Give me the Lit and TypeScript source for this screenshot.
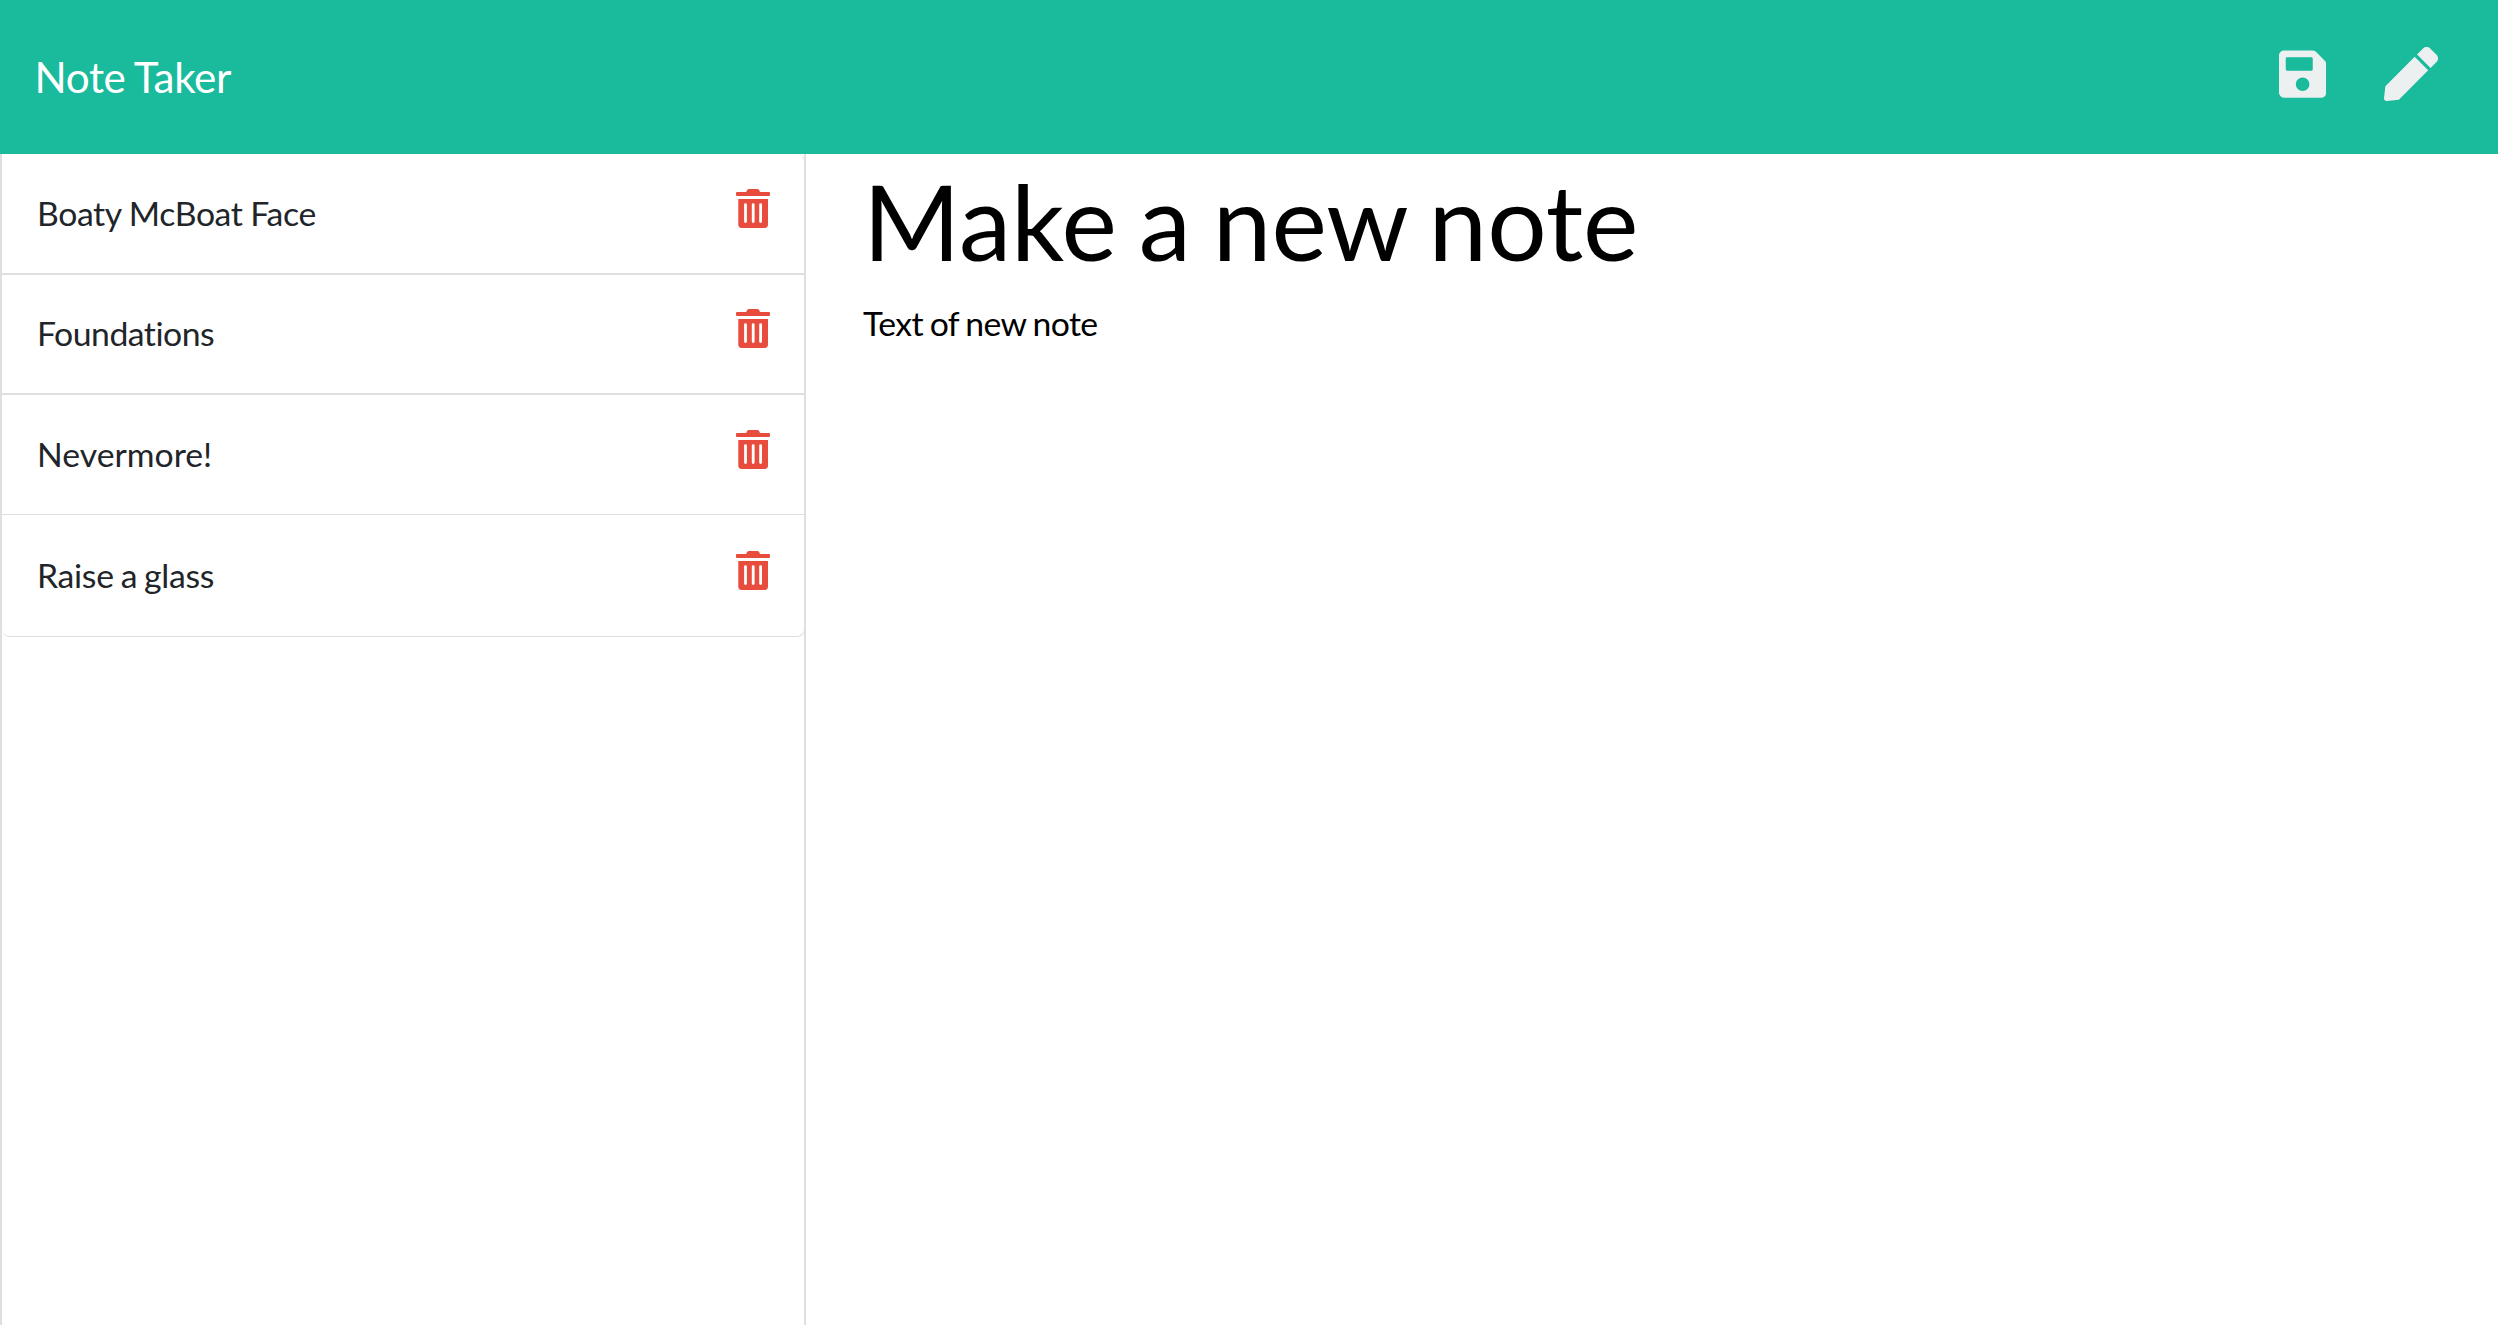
import { LitElement, html, css } from "lit";
import { customElement, state } from "lit/decorators.js";

@customElement("app-root")
export class AppRoot extends LitElement {
  static styles = css`
    :host {
      display: block;
      width: 100%;
      height: 1333px;
      background: #fff;
      font-family: Lato, "Open Sans", sans-serif;
      font-size: 33.75px;
      line-height: 50px;
      color: #212529;
      font-variant-ligatures: none;
    }
    * { box-sizing: border-box; }
    .navbar {
      height: 154px;
      padding: 0 60px 6px 34.5px;
      display: flex;
      align-items: center;
      justify-content: space-between;
      background: #1abb9c;
    }
    .brand {
      color: #fff;
      font-size: 42.19px;
      line-height: 64px;
      padding-top: 5px;
      letter-spacing: -0.35px;
      word-spacing: -0.9px;
    }
    .actions { display: flex; gap: 58px; color: #ecf0f1; }
    .actions svg { height: 54px; fill: currentColor; }
    .main { display: flex; height: 1171px; }
    .card { width: 806px; border: 2px solid #dfdfdf; border-width: 0 2px 0 2px; }
    .list {
      list-style: none;
      margin: 0 -1px 0 0;
      padding: 0;
      border: 1px solid #dfdfdf;
      border-width: 0 1px 1px 0;
      border-radius: 0 8px 8px 8px;
      background: #fff;
    }
    .item {
      display: flex;
      justify-content: space-between;
      align-items: flex-start;
      height: 121px;
      padding: 35px 34px 0 35px;
      border-bottom: 2px solid #dfdfdf;
      letter-spacing: -0.4px;
      word-spacing: -0.4px;
    }
    .item:nth-child(2) { height: 120px; padding-top: 34px; letter-spacing: -0.5px; }
    .item:nth-child(3) { height: 120px; border-bottom-width: 1px; letter-spacing: 0; }
    .item:last-child { padding-top: 36px; border-bottom: 0; letter-spacing: -0.3px; word-spacing: -1.4px; }
    .label { margin-top: -1px; }
    .trash { width: 34px; height: 39px; fill: #e74c3c; }
    .note { padding: 12px 0 0 57px; color: #000; }
    .title {
      margin: 0;
      font-size: 105px;
      font-weight: 400;
      line-height: 108px;
      word-spacing: -5px;
    }
    .text { margin: 24px 0 0; letter-spacing: -0.6px; word-spacing: -1.3px; }
  `;

  @state() private notes = ["Boaty McBoat Face", "Foundations", "Nevermore!", "Raise a glass"];

  private trash() {
    return html`<svg class="trash" viewBox="0 0 34 39"><path fill-rule="evenodd" d="M1 3H10.2L11 1.2Q11.7 0 13 0H21.3Q22.6 0 23.3 1.2L24 3H33Q34 3 34 4V6Q34 7 33 7H1Q0 7 0 6V4Q0 3 1 3ZM2.3 10H32V35.6Q32 39 28.6 39H5.7Q2.3 39 2.3 35.6ZM9.5 14.2Q8.1 14.2 8.1 15.6V32.6Q8.1 34 9.5 34T10.9 32.6V15.6Q10.9 14.2 9.5 14.2ZM17.2 14.2Q15.8 14.2 15.8 15.6V32.6Q15.8 34 17.2 34T18.6 32.6V15.6Q18.6 14.2 17.2 14.2ZM24.6 14.2Q23.2 14.2 23.2 15.6V32.6Q23.2 34 24.6 34T26 32.6V15.6Q26 14.2 24.6 14.2Z"/></svg>`;
  }

  render() {
    return html`
      <nav class="navbar">
        <span class="brand">Note Taker</span>
        <div class="actions">
          <svg viewBox="0 0 448 512"><path d="M433.941 129.941l-83.882-83.882A48 48 0 0 0 316.118 32H48C21.49 32 0 53.49 0 80v352c0 26.51 21.49 48 48 48h352c26.51 0 48-21.49 48-48V163.882a48 48 0 0 0-14.059-33.941zM224 416c-35.346 0-64-28.654-64-64 0-35.346 28.654-64 64-64s64 28.654 64 64c0 35.346-28.654 64-64 64zm96-304.52V212c0 6.627-5.373 12-12 12H76c-6.627 0-12-5.373-12-12V108c0-6.627 5.373-12 12-12h228.52c3.183 0 6.235 1.264 8.485 3.515l3.48 3.48A11.996 11.996 0 0 1 320 111.48z"/></svg>
          <svg viewBox="0 0 512 512"><path d="M290.74 93.24l128.02 128.02-277.99 277.99-114.14 12.6C11.35 513.54-1.56 500.62.14 485.34l12.7-114.22 277.9-277.88zm207.2-19.06l-60.11-60.11c-18.75-18.75-49.16-18.75-67.91 0l-56.55 56.55 128.02 128.02 56.55-56.55c18.75-18.76 18.75-49.16 0-67.91z"/></svg>
        </div>
      </nav>
      <main class="main">
        <aside class="card">
          <ul class="list">
            ${this.notes.map((n) => html`<li class="item"><span class="label">${n}</span>${this.trash()}</li>`)}
          </ul>
        </aside>
        <section class="note">
          <h1 class="title">Make a new note</h1>
          <p class="text">Text of new note</p>
        </section>
      </main>
    `;
  }
}
